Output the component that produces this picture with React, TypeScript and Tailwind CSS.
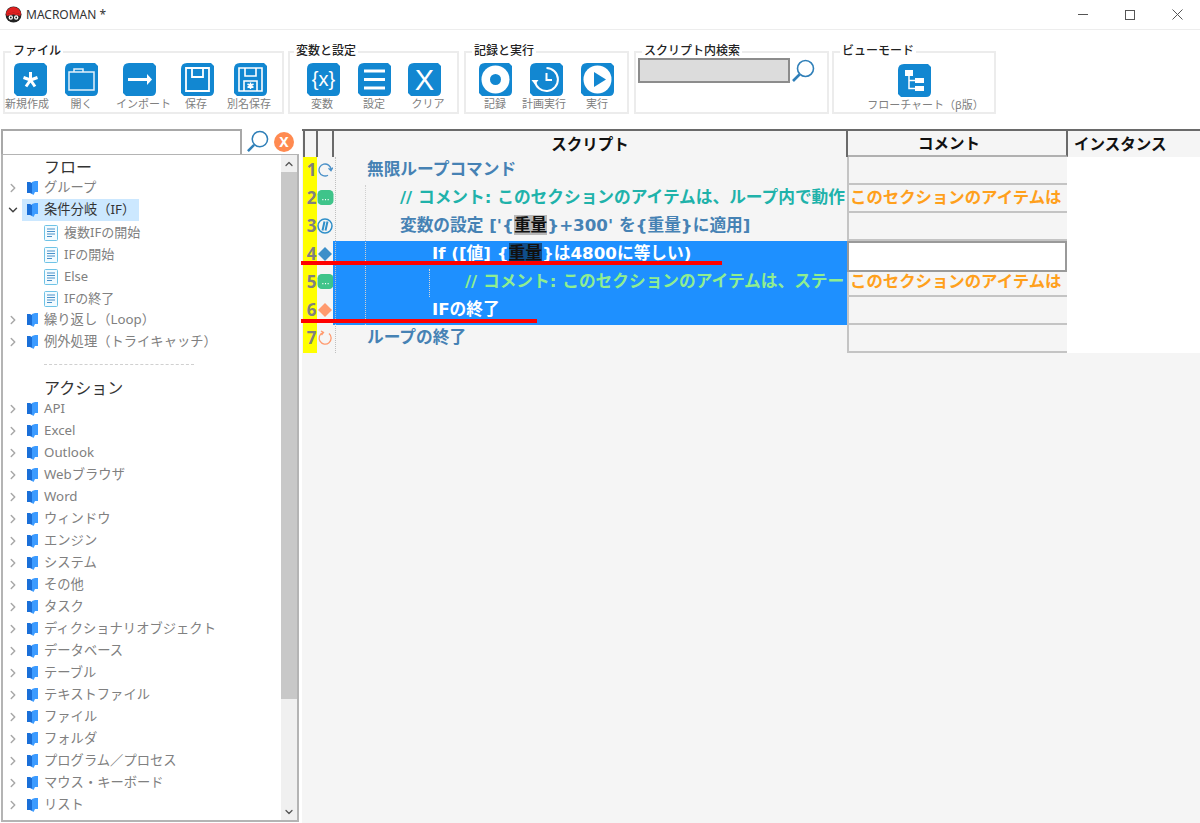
import { ChevronDown, ChevronRight, ChevronUp } from "lucide-react"

const font = "font-['Noto_Sans','Noto_Sans_CJK_JP',sans-serif]"
const scriptFont = "font-['DejaVu_Sans','Noto_Sans_CJK_JP',sans-serif]"

// blue tile shared by all toolbar buttons
function Tile({ children }: { children: React.ReactNode }) {
  return (
    <svg width="33" height="33" viewBox="0 0 33 33" className="block">
      <path d="M6 0H30L33 3V28Q33 33 28 33H3L0 30V6Q0 0 6 0Z" fill="#1287d1" />
      {children}
    </svg>
  )
}

function ToolButton({ label, className, labelClass, children }: { label: string; className: string; labelClass?: string; children: React.ReactNode }) {
  return (
    <div className={`flex flex-col items-center ${className}`}>
      <Tile>{children}</Tile>
      <span className={`mt-[1px] whitespace-nowrap text-[11px] leading-[14px] text-[#808080] ${labelClass ?? ""}`}>{label}</span>
    </div>
  )
}

function Group({ title, className, titleClass, children }: { title: string; className: string; titleClass?: string; children?: React.ReactNode }) {
  return (
    <div className={`relative h-[63px] border-2 border-[#ececec] ${className}`}>
      <span className={`absolute -top-[9px] bg-white px-[2px] text-[12px] font-medium leading-[14px] text-[#222] ${titleClass ?? "left-[6px]"}`}>{title}</span>
      {children}
    </div>
  )
}

function SearchIcon({ size }: { size: number }) {
  return (
    <svg width={size} height={size} viewBox="0 0 24 24" fill="none" stroke="#2f7fb8" strokeWidth="1.6">
      <circle cx="14.5" cy="9.5" r="8" />
      <path d="M8.5 15.5L2 22" strokeWidth="2.6" />
    </svg>
  )
}

function Book() {
  return (
    <svg width="11" height="14" viewBox="0 0 11 14" className="shrink-0">
      <path d="M0 1H3L5 2V13L3 12H0Z" fill="#1a6fd8" />
      <path d="M5 1L8 0H11V11H8L6.5 14L5 13Z" fill="#3c9bff" />
    </svg>
  )
}

function Doc() {
  return (
    <svg width="14" height="16" viewBox="0 0 14 16" className="shrink-0">
      <rect x="0.5" y="0.5" width="13" height="15" rx="1" fill="#f2fbff" stroke="#6fc3e6" />
      <path d="M3 4H11M3 6.5H11M3 9H11M3 11.5H8" stroke="#4a90c8" strokeWidth="1" />
    </svg>
  )
}

function TreeGroup({ label, open, active }: { label: string; open?: boolean; active?: boolean }) {
  return (
    <div className="flex h-[22px] items-center">
      <span className="flex w-[19px] justify-center">
        {open ? (
          <ChevronDown size={14} strokeWidth={2.5} color="#444" />
        ) : (
          <ChevronRight size={14} strokeWidth={2.5} color="#a8a8a8" />
        )}
      </span>
      <div className={`flex h-[22px] items-center pl-[5px] pr-[4px] ${active ? "bg-[#cce8ff] text-[#333]" : "text-[#808080]"}`}>
        <Book />
        <span className="ml-[6px] whitespace-nowrap text-[13.3px]">{label}</span>
      </div>
    </div>
  )
}

function TreeLeaf({ label }: { label: string }) {
  return (
    <div className="flex h-[22px] items-center pl-[41px] pt-[2px] text-[#808080]">
      <Doc />
      <span className="ml-[6px] whitespace-nowrap text-[13px]">{label}</span>
    </div>
  )
}

const actions = [
  "API",
  "Excel",
  "Outlook",
  "Webブラウザ",
  "Word",
  "ウィンドウ",
  "エンジン",
  "システム",
  "その他",
  "タスク",
  "ディクショナリオブジェクト",
  "データベース",
  "テーブル",
  "テキストファイル",
  "ファイル",
  "フォルダ",
  "プログラム／プロセス",
  "マウス・キーボード",
  "リスト",
]

function Tree() {
  return (
    <div className="flex min-h-0 flex-1 overflow-hidden border-2 border-t border-[#b4b4b4]">
      <div className="min-w-0 flex-1 overflow-hidden">
        <div className="h-[22px] pl-[41px] text-[16px] leading-[24px] text-[#333]">フロー</div>
        <TreeGroup label="グループ" />
        <TreeGroup label="条件分岐（IF）" open active />
        <TreeLeaf label="複数IFの開始" />
        <TreeLeaf label="IFの開始" />
        <TreeLeaf label="Else" />
        <TreeLeaf label="IFの終了" />
        <TreeGroup label="繰り返し（Loop）" />
        <TreeGroup label="例外処理（トライキャッチ）" />
        <div className="flex h-[23px] items-center pl-[41px]">
          <div className="w-[150px] border-t border-dashed border-[#d0d0d0]" />
        </div>
        <div className="h-[22px] pl-[41px] text-[16px] leading-[24px] text-[#333]">アクション</div>
        {actions.map((a) => (
          <TreeGroup key={a} label={a} />
        ))}
      </div>
      <div className="flex w-[16px] shrink-0 flex-col bg-[#f0f0f0]">
        <div className="flex h-[17px] items-center justify-center">
          <ChevronUp size={12} strokeWidth={2.5} color="#555" />
        </div>
        <div className="h-[527px] bg-[#c8c8c8]" />
        <div className="flex-1" />
        <div className="flex h-[17px] items-center justify-center">
          <ChevronDown size={12} strokeWidth={2.5} color="#555" />
        </div>
      </div>
    </div>
  )
}

function LoopIcon({ color, end }: { color: string; end?: boolean }) {
  return (
    <svg width="16" height="16" viewBox="0 0 16 16" fill="none" stroke={color} strokeWidth="1.3">
      {end ? (
        <path d="M6 2.5A6 6 0 1 0 12 3.5M4 1L6.5 2.5L4.5 5" />
      ) : (
        <path d="M11 13.2A6 6 0 1 1 14 7.5M11.5 6.2L14 8.6L15.8 5.6" />
      )}
    </svg>
  )
}

function CommentIcon() {
  return (
    <svg width="17" height="17" viewBox="0 0 16 16" className="shrink-0">
      <rect x="0.5" y="1" width="15" height="14" rx="4" fill="#3fc48a" />
      <path d="M5 10h1M7.5 10h1M10 10h1" stroke="#fff" strokeWidth="1.2" />
    </svg>
  )
}

function VarIcon() {
  return (
    <svg width="16" height="16" viewBox="0 0 16 16">
      <circle cx="8" cy="8" r="7" fill="none" stroke="#2f8fc9" strokeWidth="1.5" />
      <path d="M7.5 3.5L5.5 12.5M10.5 3.5L8.5 12.5" stroke="#2f8fc9" strokeWidth="2" />
    </svg>
  )
}

function Diamond({ color }: { color: string }) {
  return (
    <svg width="16" height="16" viewBox="0 0 16 16">
      <path d="M8 1L15 8L8 15L1 8Z" fill={color} />
    </svg>
  )
}

type Row = {
  no: number
  icon: React.ReactNode
  indent: string
  text: React.ReactNode
  tone: string
  selected?: boolean
  comment?: string
  editing?: boolean
}

const commentText = "このセクションのアイテムは"

const rows: Row[] = [
  { no: 1, icon: <LoopIcon color="#4a90c8" />, indent: "pl-[34px]", text: "無限ループコマンド", tone: "text-[#4682b4]" },
  {
    no: 2,
    icon: <CommentIcon />,
    indent: "pl-[67px]",
    text: "// コメント: このセクションのアイテムは、ループ内で動作",
    tone: "text-[#20b2aa]",
    comment: commentText,
  },
  {
    no: 3,
    icon: <VarIcon />,
    indent: "pl-[67px]",
    text: (
      <>
        変数の設定 ['{"{"}
        <span className="bg-[#b8b8b8] text-[#111]">重量</span>
        {"}"}+300' を{"{"}重量{"}"}に適用]
      </>
    ),
    tone: "text-[#4682b4]",
  },
  {
    no: 4,
    icon: <Diamond color="#3d8fc9" />,
    indent: "pl-[99px]",
    text: (
      <>
        If ([値] {"{"}
        <span className="bg-[#104e8b] text-[#111]">重量</span>
        {"}"}は4800に等しい)
      </>
    ),
    tone: "text-white",
    selected: true,
    editing: true,
  },
  {
    no: 5,
    icon: <CommentIcon />,
    indent: "pl-[132px]",
    text: "// コメント: このセクションのアイテムは、ステー",
    tone: "text-[#90ee90]",
    selected: true,
    comment: commentText,
  },
  { no: 6, icon: <Diamond color="#ff9a6e" />, indent: "pl-[99px]", text: "IFの終了", tone: "text-white", selected: true },
  { no: 7, icon: <LoopIcon color="#ff9a6e" end />, indent: "pl-[34px]", text: "ループの終了", tone: "text-[#4682b4]" },
]

function Script() {
  return (
    <div className="relative min-w-0 flex-1 bg-[#f5f5f5]">
      <div className="flex h-[28px] border-t-2 border-[#6a6a6a] text-[15.5px] font-bold text-[#111]">
        <div className="ml-[1px] w-[15px] border-x-2 border-[#6a6a6a]" />
        <div className="w-[16px] border-r-2 border-[#6a6a6a]" />
        <div className="flex w-[514px] items-center justify-center border-r-2 border-[#6a6a6a] pt-[2px] leading-none">スクリプト</div>
        <div className="flex w-[220px] items-center justify-center border-r-2 border-b-2 border-r-[#6a6a6a] border-b-[#b0b0b0] pr-[16px] pt-[2px] leading-none">コメント</div>
        <div className="flex flex-1 items-center pl-[6px] pt-[2px] leading-none">インスタンス</div>
      </div>
      <div className="flex">
        <div className="min-w-0">
          {rows.map((r) => (
            <div key={r.no} className="flex h-[28px]">
              <div className="ml-[1px] flex w-[14px] shrink-0 items-center justify-center bg-[#ffff00] pb-[4px] pl-[3px] text-[17px] font-bold leading-none text-[#808080]">
                {r.no}
              </div>
              <div className="flex w-[16px] shrink-0 items-center justify-center pb-[3px]">{r.icon}</div>
              <div className={`w-[514px] shrink-0 overflow-hidden whitespace-nowrap text-[16.7px] font-bold leading-[24px] ${scriptFont} ${r.tone} ${r.selected ? "bg-[#1e90ff]" : ""} ${r.indent}`}>
                {r.text}
              </div>
              {r.editing ? (
                <div className="relative z-10 h-[31px] w-[220px] shrink-0 border-2 border-[#9a9a9a] bg-white" />
              ) : (
                <div className="w-[220px] shrink-0 overflow-hidden whitespace-nowrap border-b-2 border-l-2 border-[#c4c4c4] bg-[#f5f5f5] pl-[1px] text-[16.4px] font-bold leading-[24px] text-[#ffa01c]">
                  {r.comment}
                </div>
              )}
            </div>
          ))}
        </div>
        <div className="h-[196px] flex-1 bg-white" />
      </div>
      {/* dotted guides and red annotation lines sit over the grid */}
      <div className="absolute left-[33px] top-[28px] h-[196px] border-l border-dotted border-[#c0c0c0]" />
      <div className="absolute left-[63px] top-[56px] h-[140px] border-l border-dotted border-[#d0d0d0]" />
      <div className="absolute left-[127px] top-[140px] h-[28px] border-l border-dotted border-[#d8d8d8]" />
      <div className="absolute -left-[1px] top-[132px] h-[4px] w-[421px] bg-[#ff0000]" />
      <div className="absolute -left-[1px] top-[190px] h-[4px] w-[236px] bg-[#ff0000]" />
    </div>
  )
}

export default function App() {
  return (
    <div className={`flex h-[823px] w-[1200px] flex-col overflow-hidden bg-white ${font}`}>
      {/* title bar */}
      <div className="flex h-[30px] shrink-0 items-center border-b border-[#ededed] pl-[5px]">
        <svg width="17" height="17" viewBox="0 0 17 17">
          <circle cx="8.5" cy="8.5" r="8" fill="#222" />
          <path d="M1 8.5A7.5 7.5 0 0 1 16 8.5Q8.5 5 1 8.5Z" fill="#e02020" />
          <path d="M1 8.5Q8.5 5 16 8.5L15 10Q8.5 7 2 10Z" fill="#e02020" />
          <circle cx="5.8" cy="11.5" r="2.2" fill="#fff" />
          <circle cx="11.2" cy="11.5" r="2.2" fill="#fff" />
          <circle cx="5.8" cy="11.5" r="0.9" fill="#222" />
          <circle cx="11.2" cy="11.5" r="0.9" fill="#222" />
        </svg>
        <span className="ml-[4px] text-[12px] text-[#333]">MACROMAN *</span>
        <div className="ml-auto flex items-center gap-[37px] pr-[17px]">
          <div className="h-[1px] w-[10px] bg-[#555]" />
          <div className="h-[10px] w-[10px] border border-[#555]" />
          <svg width="11" height="11" viewBox="0 0 11 11" stroke="#555" strokeWidth="1">
            <path d="M0.5 0.5L10.5 10.5M10.5 0.5L0.5 10.5" />
          </svg>
        </div>
      </div>

      {/* toolbar */}
      <div className="flex h-[99px] shrink-0 pl-[3px] pt-[21px]">
        <Group title="ファイル" className="w-[281px]">
          <div className="flex pt-[10px]">
            <ToolButton label="新規作成" className="w-[50px]" labelClass="mr-[6px]">
              <path d="M16.5 9V17M16.5 17L9.5 14.5M16.5 17L23.5 14.5M16.5 17L12 23.5M16.5 17L21 23.5" stroke="#fff" strokeWidth="3" fill="none" />
            </ToolButton>
            <ToolButton label="開く" className="w-[53px]">
              <path d="M4 9H29V27H4ZM9 9V6H18V9" fill="none" stroke="#e4f1fa" strokeWidth="1.5" />
            </ToolButton>
            <ToolButton label="インポート" className="w-[63px]" labelClass="ml-[8px]">
              <path d="M5 16.5H24" stroke="#fff" strokeWidth="3" />
              <path d="M24 11L29 16.5L24 22Z" fill="#fff" />
            </ToolButton>
            <ToolButton label="保存" className="w-[52px]" labelClass="mr-[2px]">
              <path d="M5 5H28V28H5ZM11 5V14H22V5" fill="none" stroke="#fff" strokeWidth="1.8" />
            </ToolButton>
            <ToolButton label="別名保存" className="w-[54px]" labelClass="mr-[2px]">
              <path d="M5 5H28V28H5ZM11 5V13H22V5M10 28V18H23V28" fill="none" stroke="#fff" strokeWidth="1.6" />
              <path d="M16.5 19.5V26M13.5 21L19.5 24.5M19.5 21L13.5 24.5" stroke="#fff" strokeWidth="1.5" />
            </ToolButton>
          </div>
        </Group>
        <Group title="変数と設定" className="ml-[4px] w-[171px]" titleClass="left-[4px]">
          <div className="flex pl-[1px] pt-[10px]">
            <ToolButton label="変数" className="w-[64px]" labelClass="mr-[2px]">
              <text x="16.5" y="23" textAnchor="middle" fontSize="20" fill="#fff" fontFamily="Liberation Sans">{"{x}"}</text>
            </ToolButton>
            <ToolButton label="設定" className="w-[38px]">
              <path d="M6 8H27M6 16.5H27M6 25H27" stroke="#fff" strokeWidth="3" />
            </ToolButton>
            <ToolButton label="クリア" className="w-[62px]" labelClass="ml-[8px]">
              <text x="16.5" y="27" textAnchor="middle" fontSize="29" fill="#fff" fontFamily="Liberation Sans">X</text>
            </ToolButton>
          </div>
        </Group>
        <Group title="記録と実行" className="ml-[5px] w-[165px]">
          <div className="flex pl-[4px] pt-[10px]">
            <ToolButton label="記録" className="w-[50px]">
              <circle cx="16.5" cy="16.5" r="14" fill="#fff" />
              <circle cx="16.5" cy="16.5" r="5.5" fill="#1287d1" />
            </ToolButton>
            <ToolButton label="計画実行" className="w-[52px]" labelClass="mr-[4px]">
              <path d="M5 18A11.5 11.5 0 1 0 16.5 5M16.5 10V17H22" fill="none" stroke="#fff" strokeWidth="2" />
              <path d="M1.5 17H8.5L5 21.5Z" fill="#fff" />
            </ToolButton>
            <ToolButton label="実行" className="w-[50px]">
              <circle cx="16.5" cy="16.5" r="14" fill="#fff" />
              <path d="M13 9L25 16.5L13 24Z" fill="#1287d1" />
            </ToolButton>
          </div>
        </Group>
        <Group title="スクリプト内検索" className="ml-[5px] w-[195px]">
          <div className="flex items-center pl-[2px] pt-[5px]">
            <div className="h-[25px] w-[152px] border-2 border-[#8c8c8c] bg-[#dcdcdc]" />
            <span className="ml-[1px]">
              <SearchIcon size={24} />
            </span>
          </div>
        </Group>
        <Group title="ビューモード" className="ml-[3px] w-[164px]">
          <div className="flex justify-center pt-[11px]">
            <ToolButton label="フローチャート（β版）" className="w-[130px]" labelClass="ml-[23px]">
              <path d="M7 6H15V12H7ZM17 14H26V19H17ZM17 22H26V27H17Z" fill="#fff" />
              <path d="M11 12V24.5H17M11 16.5H17" fill="none" stroke="#fff" strokeWidth="1.5" />
            </ToolButton>
          </div>
        </Group>
      </div>

      {/* main area */}
      <div className="flex min-h-0 flex-1">
        <div className="flex w-[299px] shrink-0 flex-col pl-[1px] pb-[1px]">
          <div className="flex h-[25px] shrink-0 items-center">
            <div className="h-[25px] w-[241px] border-2 border-b-0 border-[#a8a8a8] bg-white" />
            <span className="ml-[4px]">
              <SearchIcon size={23} />
            </span>
            <span className="ml-[5px] flex h-[20px] w-[20px] items-center justify-center rounded-full bg-[#ff8a50] text-[14px] font-bold leading-none text-white">X</span>
          </div>
          <Tree />
        </div>
        <div className="w-[3px] shrink-0 bg-white" />
        <Script />
      </div>
    </div>
  )
}
